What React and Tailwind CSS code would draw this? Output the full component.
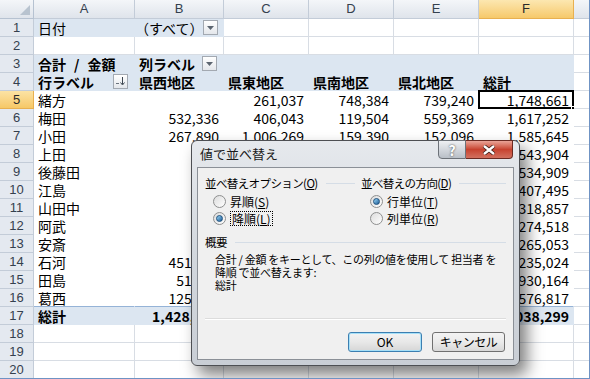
import React from "react";

// 列幅 (A..G)
const COLS = [101, 89, 85, 85, 85, 95, 100];
const LETTERS = ["A", "B", "C", "D", "E", "F", ""];
const FILL = "#dce6f1";
const GRID = "#d8dde4";

const data = [
  ["緒方", "", "261,037", "748,384", "739,240", "1,748,661"],
  ["梅田", "532,336", "406,043", "119,504", "559,369", "1,617,252"],
  ["小田", "267,890", "1,006,269", "159,390", "152,096", "1,585,645"],
  ["上田", "", "512,300", "604,118", "427,486", "1,543,904"],
  ["後藤田", "", "398,270", "702,455", "434,184", "1,534,909"],
  ["江島", "", "611,032", "298,711", "497,752", "1,407,495"],
  ["山田中", "", "402,118", "515,630", "401,109", "1,318,857"],
  ["阿武", "", "355,905", "487,221", "431,392", "1,274,518"],
  ["安斎", "", "512,447", "309,880", "442,726", "1,265,053"],
  ["石河", "451,208", "289,634", "311,502", "182,680", "1,235,024"],
  ["田島", "51,320", "402,771", "276,093", "199,980", "930,164"],
  ["葛西", "125,472", "188,410", "143,385", "119,550", "576,817"],
];

function DropButton() {
  return (
    <span className="ml-auto mr-[2px] w-[15px] h-[15px] border border-[#a3a9b1] bg-linear-to-b from-white to-[#e4e7eb] flex items-center justify-center shrink-0">
      <svg width="7" height="4" viewBox="0 0 7 4">
        <path d="M0 0h7L3.5 4z" fill="#5c6570" />
      </svg>
    </span>
  );
}

function SortButton() {
  return (
    <span className="ml-auto mr-[2px] w-[15px] h-[15px] border border-[#a3a9b1] bg-linear-to-b from-white to-[#e4e7eb] flex items-center justify-center shrink-0">
      <svg width="11" height="9" viewBox="0 0 11 9">
        <path d="M1 6.5h3" stroke="#6a737d" strokeWidth="1" />
        <path d="M7.5 0v7" stroke="#3d4650" strokeWidth="1" />
        <path d="M5.5 5.5l2 2.5 2-2.5" stroke="#3d4650" strokeWidth="1" fill="none" />
      </svg>
    </span>
  );
}

function Cell({ w, c = {}, borderB }) {
  const bg = c.fill ? FILL : "#ffffff";
  const lineColor = c.grid ? GRID : bg;
  return (
    <div
      className={`relative h-[18px] shrink-0 flex items-center border-r border-b px-[4px] overflow-visible whitespace-nowrap ${
        c.right ? "justify-end" : ""
      } ${c.bold ? "font-bold" : ""}`}
      style={{
        width: w,
        backgroundColor: bg,
        borderRightColor: lineColor,
        borderBottomColor: borderB || lineColor,
      }}
    >
      {c.t}
      {c.dd && <DropButton />}
      {c.sort && <SortButton />}
      {c.sel && (
        <span className="absolute left-[-1px] top-[-1px] right-[-1px] bottom-[-1px] border-2 border-black">
          <span className="absolute right-[-4px] bottom-[-4px] w-[5px] h-[5px] bg-black border border-white" />
        </span>
      )}
    </div>
  );
}

function buildRows() {
  const rows = [];
  const grid = () => ({ grid: true });
  rows.push([
    { t: "日付", fill: true },
    { t: <span className="ml-[-4px]">（すべて）</span>, fill: true, dd: true },
    grid(), grid(), grid(), grid(), grid(),
  ]);
  rows.push(LETTERS.map(() => grid()));
  rows.push([
    {
      t: (
        <>
          合計<span className="mx-[8px]">/</span>金額
        </>
      ),
      fill: true,
      bold: true,
    },
    { t: "列ラベル", fill: true, bold: true, dd: true },
    { fill: true }, { fill: true }, { fill: true }, { fill: true },
    grid(),
  ]);
  rows.push([
    { t: "行ラベル", fill: true, bold: true, sort: true },
    { t: "県西地区", fill: true, bold: true },
    { t: "県東地区", fill: true, bold: true },
    { t: "県南地区", fill: true, bold: true },
    { t: "県北地区", fill: true, bold: true },
    { t: "総計", fill: true, bold: true },
    grid(),
  ]);
  data.forEach((d, i) => {
    rows.push([
      { t: d[0] },
      ...d.slice(1).map((v, j) => ({ t: v, right: true, sel: i === 0 && j === 4 })),
      grid(),
    ]);
  });
  rows.push([
    { t: "総計", fill: true, bold: true },
    { t: "1,428,336", fill: true, bold: true, right: true },
    { t: "5,341,191", fill: true, bold: true, right: true },
    { t: "4,711,874", fill: true, bold: true, right: true },
    { t: "4,557,898", fill: true, bold: true, right: true },
    { t: "16,038,299", fill: true, bold: true, right: true },
    grid(),
  ]);
  for (let i = 0; i < 3; i++) rows.push(LETTERS.map(() => grid()));
  return rows;
}

function Radio({ checked }) {
  return (
    <span className="w-[13px] h-[13px] rounded-full border border-[#8e8f8f] bg-linear-to-br from-[#dcdcdc] to-white flex items-center justify-center shrink-0">
      {checked && (
        <span className="w-[7px] h-[7px] rounded-full bg-linear-to-br from-[#9ad8f8] to-[#1b5c96] border border-[#1d4f7c]" />
      )}
    </span>
  );
}

function GroupHead({ children, className = "" }) {
  return (
    <div className={`flex items-center h-[14px] ${className}`}>
      <span className="whitespace-nowrap text-[11.5px] tracking-[-0.6px]">{children}</span>
      <span className="flex-1 ml-[8px] h-px bg-[#d5dde6]" />
    </div>
  );
}

function SortDialog() {
  return (
    <div className="absolute left-[191px] top-[140px] w-[329px] h-[226px] rounded-[6px] border border-[#4d4f53] bg-linear-to-b from-[#e6e9ed] via-[#d3d8de] to-[#c9ced5] shadow-[7px_9px_16px_rgba(0,0,0,0.5)] font-['Noto_Sans_CJK_JP',sans-serif] text-[12px] text-black">
      {/* タイトルバー */}
      <div className="h-[26px] flex items-center pl-[8px] relative">
        <span className="text-[13px] text-[#1a1a1a]">値で並べ替え</span>
        <div className="absolute right-[6px] top-[-1px] flex">
          <span className="w-[28px] h-[19px] rounded-bl-[4px] border border-[#6d7279] bg-linear-to-b from-[#eef0f3] to-[#b9bfc7] flex items-center justify-center text-white font-bold text-[14px] [text-shadow:0_0_2px_#333]">
            ?
          </span>
          <span className="w-[47px] h-[19px] rounded-br-[4px] border border-l-0 border-[#6b2a22] bg-linear-to-b from-[#e9a397] via-[#c7422f] to-[#d2705f] flex items-center justify-center">
            <svg width="14" height="10" viewBox="0 0 14 10">
              <path d="M2 1l10 8M12 1L2 9" stroke="#3a1a14" strokeWidth="4" />
              <path d="M2 1l10 8M12 1L2 9" stroke="#ffffff" strokeWidth="2.4" />
            </svg>
          </span>
        </div>
      </div>
      {/* クライアント領域 */}
      <div className="mx-[5px] h-[193px] border border-[#8b9097] bg-[#f0f0f0] px-[7px] pt-[8px] flex flex-col">
        <div className="flex">
          <div className="w-[150px]">
            <GroupHead>並べ替えオプション(<u>O</u>)</GroupHead>
            <div className="pl-[8px] mt-[5px] flex flex-col gap-[4px]">
              <div className="flex items-center gap-[4px] h-[13px]">
                <Radio />
                <span>昇順(<u>S</u>)</span>
              </div>
              <div className="flex items-center gap-[4px] h-[13px]">
                <Radio checked />
                <span className="border border-dotted border-black px-px leading-[13px]">
                  降順(<u>L</u>)
                </span>
              </div>
            </div>
          </div>
          <div className="flex-1 ml-[6px]">
            <GroupHead>並べ替えの方向(<u>D</u>)</GroupHead>
            <div className="pl-[9px] mt-[5px] flex flex-col gap-[4px]">
              <div className="flex items-center gap-[4px] h-[13px]">
                <Radio checked />
                <span>行単位(<u>T</u>)</span>
              </div>
              <div className="flex items-center gap-[4px] h-[13px]">
                <Radio />
                <span>列単位(<u>R</u>)</span>
              </div>
            </div>
          </div>
        </div>
        <GroupHead className="mt-[10px]">概要</GroupHead>
        <div className="pl-[10px] mt-[4px] leading-[13px] text-[11px] tracking-[-0.3px] whitespace-nowrap">
          <div>合計 / 金額 をキーとして、この列の値を使用して 担当者 を</div>
          <div>降順 で並べ替えます:</div>
          <div>総計</div>
        </div>
        <div className="mt-auto h-[2px] border-t border-[#dcdcdc] border-b-white border-b" />
        <div className="flex justify-end gap-[10px] pt-[12px] pb-[7px] pr-[1px]">
          <span className="w-[74px] h-[20px] rounded-[3px] border border-[#3c7fb1] shadow-[inset_0_0_0_1px_#a6e0f8] bg-linear-to-b from-[#f3f3f3] via-[#e8e8e8] to-[#d6d6d6] flex items-center justify-center">
            OK
          </span>
          <span className="w-[73px] h-[20px] rounded-[3px] border border-[#707070] bg-linear-to-b from-[#f3f3f3] via-[#ebebeb] to-[#d8d8d8] flex items-center justify-center tracking-[-0.5px]">
            キャンセル
          </span>
        </div>
      </div>
    </div>
  );
}

export default function App() {
  const rows = buildRows();
  return (
    <div className="relative w-[590px] h-[379px] overflow-hidden bg-white border-r border-b border-[#6f93c4] font-['Noto_Sans_CJK_JP',sans-serif] text-[14px] leading-[18px] text-black">
      {/* 列見出し */}
      <div className="flex h-[19px]">
        <div className="w-[34px] shrink-0 h-[19px] relative bg-linear-to-b from-[#f4f6f9] to-[#dfe4eb] border-r border-b border-[#b6c2d1]">
          <svg className="absolute right-[3px] bottom-[3px]" width="10" height="10" viewBox="0 0 10 10">
            <path d="M10 0v10H0z" fill="#b8c3cf" />
          </svg>
        </div>
        {LETTERS.map((l, i) => (
          <div
            key={i}
            style={{ width: COLS[i] }}
            className={`shrink-0 h-[19px] flex items-center justify-center border-r border-b font-['Liberation_Sans',sans-serif] text-[13px] ${
              l === "F"
                ? "bg-linear-to-b from-[#fce7b0] to-[#f6c96a] border-[#e8b050] text-[#2a2a2a]"
                : "bg-linear-to-b from-[#f4f6f9] to-[#dfe4eb] border-[#c3ccd8] text-[#34404e]"
            }`}
          >
            {l}
          </div>
        ))}
      </div>
      {/* 行 */}
      {rows.map((cells, r) => (
        <div key={r} className="flex">
          <div
            className={`w-[34px] shrink-0 h-[18px] flex items-center justify-center border-r border-b font-['Liberation_Sans',sans-serif] text-[13px] ${
              r === 4
                ? "bg-linear-to-b from-[#fce3a4] to-[#f6c866] border-[#e8b050] text-[#2a2a2a]"
                : "bg-[#e4e9f0] border-[#c3ccd8] text-[#34404e]"
            }`}
          >
            {r + 1}
          </div>
          {cells.map((c, i) => (
            <Cell
              key={i}
              w={COLS[i]}
              c={c}
              borderB={r === 15 && i < 6 ? "#95b3d7" : undefined}
            />
          ))}
        </div>
      ))}
      <SortDialog />
    </div>
  );
}
